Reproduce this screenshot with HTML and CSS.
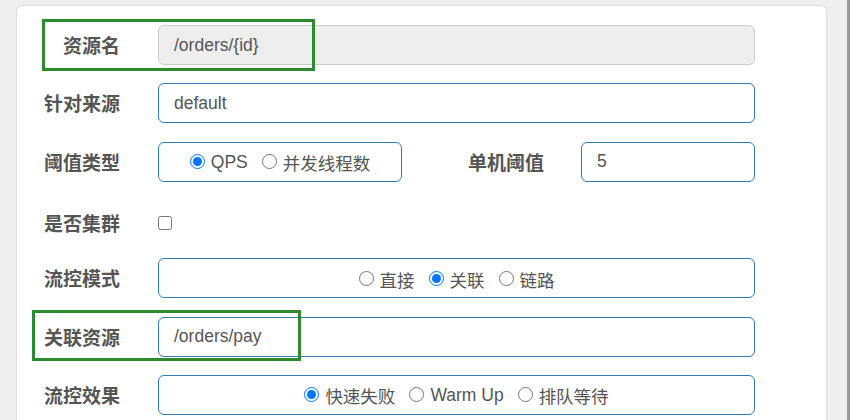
FILE: index.html
```html
<!DOCTYPE html>
<html lang="zh-CN">
<head>
<meta charset="utf-8">
<title>流控规则</title>
<link rel="stylesheet" href="styles.css">
</head>
<body>
<div class="page">
  <div class="main">
    <div class="panel">
      <form class="form">
        <div class="row">
          <label class="lbl">资源名</label>
          <div class="field"><input class="input disabled" type="text" value="/orders/{id}" disabled></div>
        </div>
        <div class="row">
          <label class="lbl">针对来源</label>
          <div class="field"><input class="input" type="text" value="default"></div>
        </div>
        <div class="row">
          <label class="lbl">阈值类型</label>
          <div class="field">
            <div class="radio-box small">
              <label class="opt"><input type="radio" name="grade" checked><span>QPS</span></label>
              <label class="opt"><input type="radio" name="grade"><span>并发线程数</span></label>
            </div>
            <label class="lbl lbl2">单机阈值</label>
            <input class="input sub" type="text" value="5">
          </div>
        </div>
        <div class="row row-check">
          <label class="lbl">是否集群</label>
          <div class="field"><input class="checkbox" type="checkbox"></div>
        </div>
        <div class="row">
          <label class="lbl">流控模式</label>
          <div class="field">
            <div class="radio-box wide">
              <label class="opt"><input type="radio" name="strategy"><span>直接</span></label>
              <label class="opt"><input type="radio" name="strategy" checked><span>关联</span></label>
              <label class="opt"><input type="radio" name="strategy"><span>链路</span></label>
            </div>
          </div>
        </div>
        <div class="row">
          <label class="lbl">关联资源</label>
          <div class="field"><input class="input" type="text" value="/orders/pay"></div>
        </div>
        <div class="row">
          <label class="lbl">流控效果</label>
          <div class="field">
            <div class="radio-box wide">
              <label class="opt"><input type="radio" name="behavior" checked><span>快速失败</span></label>
              <label class="opt"><input type="radio" name="behavior"><span>Warm Up</span></label>
              <label class="opt"><input type="radio" name="behavior"><span>排队等待</span></label>
            </div>
          </div>
        </div>
      </form>
      <div class="mark mark1"></div>
      <div class="mark mark2"></div>
    </div>
  </div>
  <div class="strip"></div>
</div>
</body>
</html>
```

FILE: styles.css
```css
* { box-sizing: border-box; }
html, body { margin: 0; padding: 0; }
body {
  width: 850px;
  height: 420px;
  overflow: hidden;
  background: #efefef;
  font-family: "Liberation Sans", "Noto Sans CJK SC", sans-serif;
  color: #555;
}
.page { display: flex; height: 420px; }
.main { flex: 1; padding: 5px 0 0 16px; overflow: hidden; }
.strip { width: 3px; background: #9a9a9a; }
.panel {
  position: relative;
  width: 811px;
  height: 415px;
  background: #fff;
  border: 1px solid #dcdcdc;
  border-bottom: 0;
  border-radius: 6px 6px 0 0;
  padding: 19px 71px 0 0;
}
.form { display: flex; flex-direction: column; gap: 18.33px; }
.row { display: flex; align-items: center; height: 40px; }
.lbl {
  width: 103px;
  flex: none;
  margin-right: 38px;
  text-align: right;
  font-family: "Liberation Sans", "Noto Sans CJK SC", sans-serif;
  font-size: 19px;
  font-weight: bold;
  line-height: 1;
  color: #555;
  padding-top: 3px;
}
.field { flex: 1; display: flex; align-items: center; height: 40px; }
.input {
  width: 100%;
  height: 40px;
  border: 1px solid #337ab7;
  border-radius: 6px;
  padding: 0 15px;
  font-family: "Liberation Sans", "Noto Sans CJK SC", sans-serif;
  font-size: 17.5px;
  color: #555;
  background: #fff;
  outline: none;
}
.input.disabled { background: #eee; border-color: #ccc; }
.radio-box {
  height: 40px;
  border: 1px solid #337ab7;
  border-radius: 6px;
  display: flex;
  align-items: center;
  justify-content: center;
  gap: 14px;
  font-size: 17.5px;
  color: #555;
}
.radio-box.small { width: 244px; flex: none; }
.radio-box.wide { width: 100%; }
.opt { display: flex; align-items: center; gap: 6px; }
.opt span { padding-top: 2px; }
.opt input { margin: 0; width: 15px; height: 15px; }
.lbl2 { flex: 1; width: auto; margin-right: 37px; }
.sub { width: 174px; flex: none; }
.row-check { padding-top: 6px; }
.checkbox { margin: 0; width: 14px; height: 14px; }
.mark { position: absolute; border: 3px solid #2e8a2e; }
.mark1 { left: 25px; top: 13px; width: 273px; height: 52px; }
.mark2 { left: 15px; top: 304px; width: 269px; height: 51px; }
```
